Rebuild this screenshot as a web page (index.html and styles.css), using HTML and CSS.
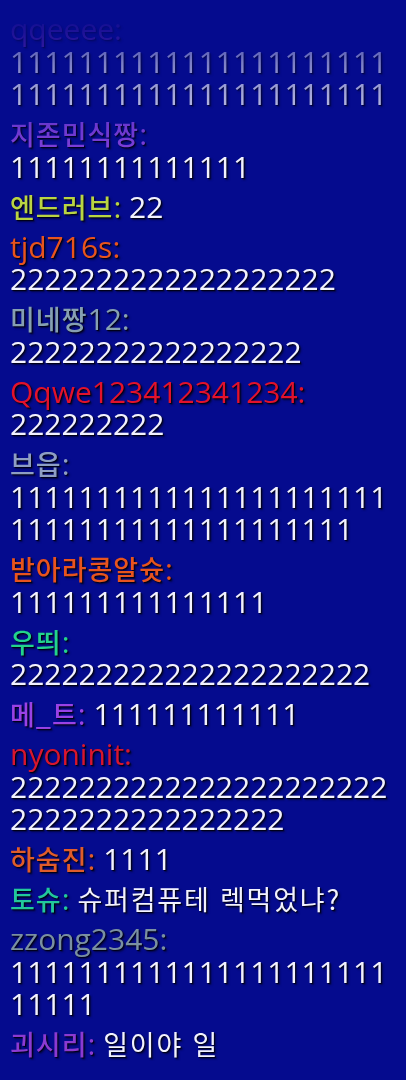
FILE: index.html
```html
<!DOCTYPE html>
<html lang="ko">
<head>
<meta charset="utf-8">
<title>Chat</title>
<link rel="stylesheet" href="styles.css">
</head>
<body>
<div class="chat">
  <p class="msg"><span class="name c-top">qqeeee:</span> <span class="text">11111111111111111111111111111111111111111111</span></p>
  <p class="msg"><span class="name c-purple"><span class="ko">지존민식짱</span>:</span> <span class="text">11111111111111</span></p>
  <p class="msg"><span class="name c-lime"><span class="ko">엔드러브</span>:</span> <span class="text">22</span></p>
  <p class="msg"><span class="name c-orange">tjd716s:</span> <span class="text">2222222222222222222</span></p>
  <p class="msg"><span class="name c-slate"><span class="ko">미네짱</span>12:</span> <span class="text">22222222222222222</span></p>
  <p class="msg"><span class="name c-red">Qqwe123412341234:</span> <span class="text">222222222</span></p>
  <p class="msg"><span class="name c-steel"><span class="ko">브읍</span>:</span> <span class="text">111111111111111111111111111111111111111111</span></p>
  <p class="msg"><span class="name c-orange"><span class="ko">받아라콩알슛</span>:</span> <span class="text">111111111111111</span></p>
  <p class="msg"><span class="name c-green"><span class="ko">우띄</span>:</span> <span class="text">222222222222222222222</span></p>
  <p class="msg"><span class="name c-violet"><span class="ko">메_트</span>:</span> <span class="text">111111111111</span></p>
  <p class="msg"><span class="name c-crimson">nyoninit:</span> <span class="text">22222222222222222222222222222222222222</span></p>
  <p class="msg"><span class="name c-rust"><span class="ko">하숨진</span>:</span> <span class="text">1111</span></p>
  <p class="msg"><span class="name c-teal"><span class="ko">토슈</span>:</span> <span class="text ko">슈퍼컴퓨테 렉먹었냐?</span></p>
  <p class="msg"><span class="name c-gray">zzong2345:</span> <span class="text">111111111111111111111111111</span></p>
  <p class="msg"><span class="name c-plum"><span class="ko">괴시리</span>:</span> <span class="text ko">일이야 일</span></p>
</div>
</body>
</html>
```

FILE: styles.css
```css
html, body {
  margin: 0;
  padding: 0;
  background: #050b8e;
}

body {
  width: 406px;
  height: 1080px;
  overflow: hidden;
}

.chat {
  display: flex;
  flex-direction: column;
  gap: 7.5px;
  padding: 13px 18px 0 10px;
  font-family: "Open Sans", "Noto Sans CJK KR", sans-serif;
  font-size: 30px;
  line-height: 32.5px;
  -webkit-mask-image: linear-gradient(to bottom, rgba(0,0,0,0.06) 15px, rgba(0,0,0,0.5) 63px, rgba(0,0,0,0.68) 95px, rgba(0,0,0,0.85) 135px, #000 155px);
  mask-image: linear-gradient(to bottom, rgba(0,0,0,0.06) 15px, rgba(0,0,0,0.5) 63px, rgba(0,0,0,0.68) 95px, rgba(0,0,0,0.85) 135px, #000 155px);
}

.msg {
  margin: 0;
  overflow-wrap: break-word;
  color: #f2f2ff;
  text-shadow: 1px 1px 1px #000014, 2px 2px 2px rgba(0, 0, 20, 0.55);
}

.ko {
  font-family: "Noto Sans CJK KR", sans-serif;
  font-size: 27px;
  line-height: 1;
}

.name .ko {
  font-weight: 500;
  letter-spacing: 1px;
}

.text.ko {
  letter-spacing: 1.8px;
}

.c-top { color: #7a2fb8; }
.c-purple { color: #8442de; }
.c-lime { color: #b9d443; }
.c-orange { color: #e8541e; }
.c-slate { color: #86a0b2; }
.c-red { color: #e2122c; }
.c-steel { color: #8e9ec4; }
.c-green { color: #22d48c; }
.c-violet { color: #9a42e6; }
.c-crimson { color: #d8162e; }
.c-rust { color: #e05c2a; }
.c-teal { color: #22c89c; }
.c-gray { color: #7a90a2; }
.c-plum { color: #8c3ad2; }
```
